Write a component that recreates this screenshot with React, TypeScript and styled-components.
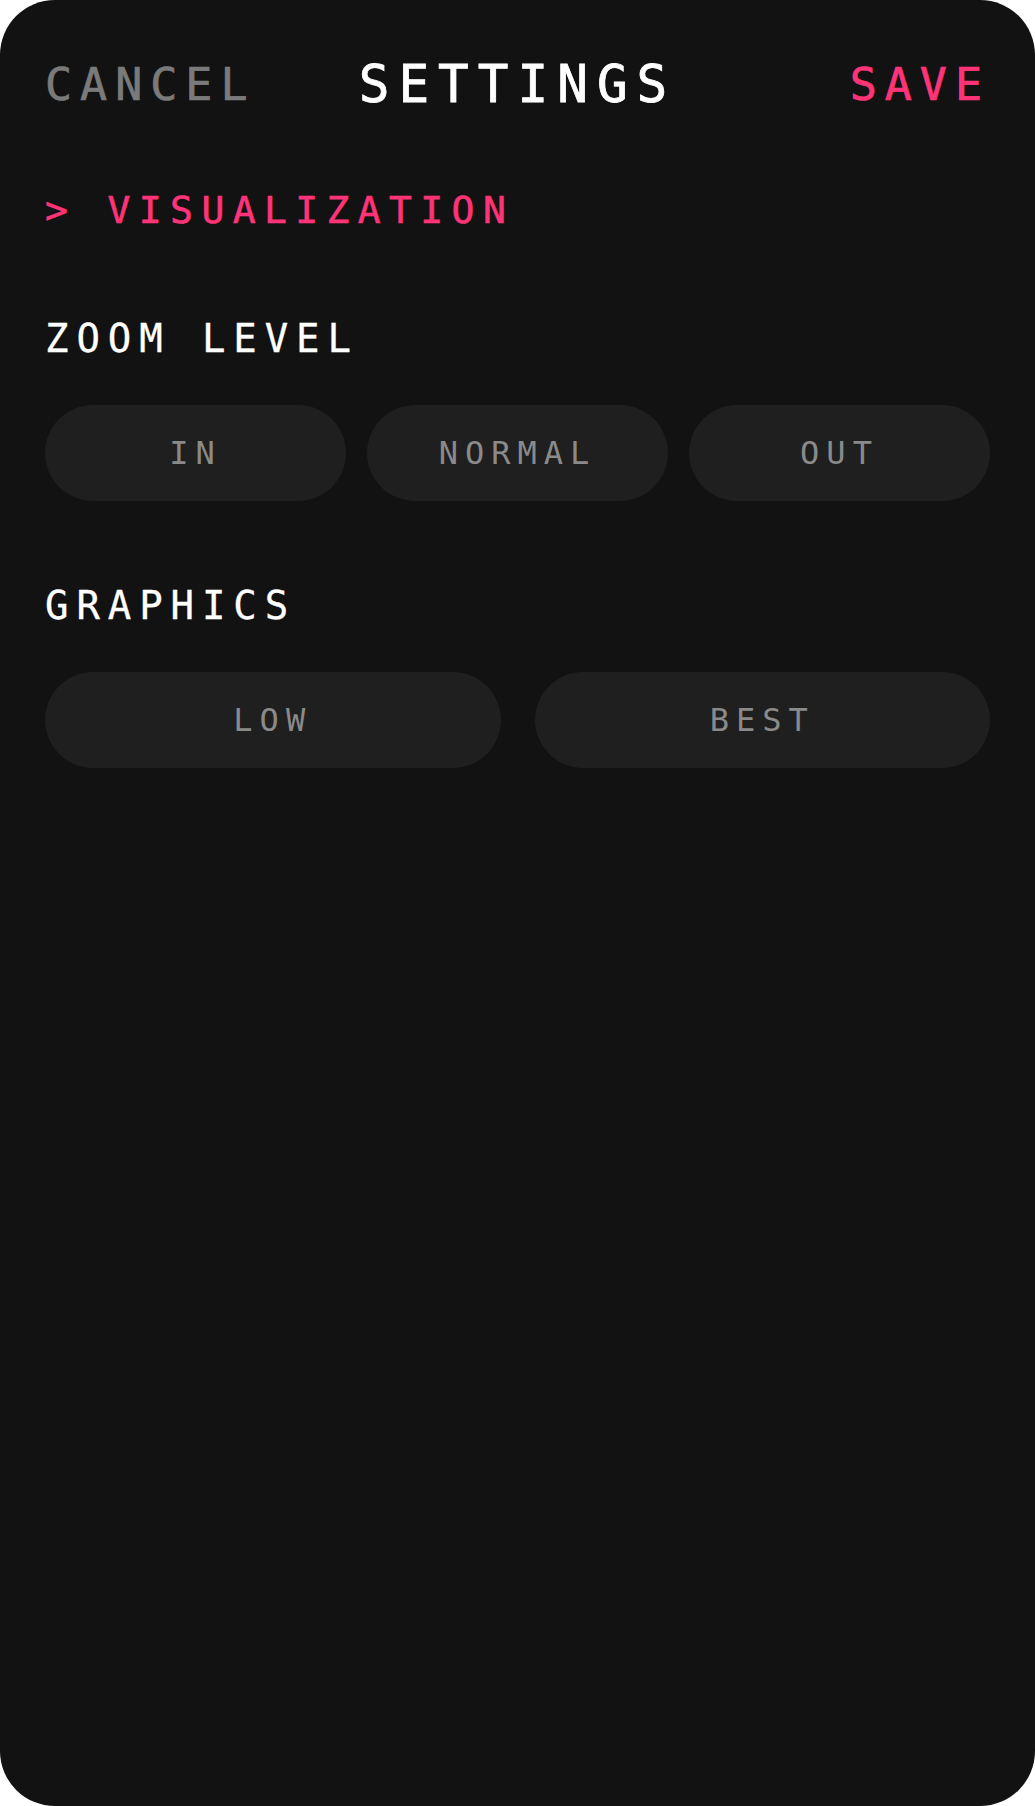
import React from "react";
import styled, { createGlobalStyle } from "styled-components";

const GlobalStyle = createGlobalStyle`
  html, body {
    margin: 0;
    padding: 0;
    background: #ffffff;
  }
`;

const mono = `"DejaVu Sans Mono", "Liberation Mono", monospace`;
const pink = "#ff3478";

const Card = styled.div`
  box-sizing: border-box;
  width: 1035px;
  height: 1806px;
  padding: 59px 45px;
  background: #121212;
  border-radius: 55px;
  font-family: ${mono};
  display: flex;
  flex-direction: column;
`;

const Header = styled.div`
  display: grid;
  grid-template-columns: 1fr auto 1fr;
  align-items: center;
  height: 51px;
`;

const HeaderAction = styled.span<{ $primary?: boolean }>`
  font-size: 45px;
  line-height: 1;
  letter-spacing: 8px;
  color: ${p => (p.$primary ? pink : "#7a7a7a")};
  -webkit-text-stroke: 0.7px currentColor;
  justify-self: ${p => (p.$primary ? "end" : "start")};
  cursor: pointer;
`;

const Title = styled.h1`
  margin: 0;
  font-size: 51px;
  font-weight: 400;
  line-height: 1;
  letter-spacing: 9px;
  color: #ffffff;
  -webkit-text-stroke: 0.8px currentColor;
`;

const Category = styled.h2`
  margin: 81px 0 0;
  font-size: 38px;
  font-weight: 400;
  line-height: 1;
  letter-spacing: 8.4px;
  color: ${pink};
  -webkit-text-stroke: 0.6px currentColor;
  white-space: pre;
`;

const Section = styled.section<{ $offset: number }>`
  display: flex;
  flex-direction: column;
  gap: 47px;
  margin-top: ${p => p.$offset}px;
`;

const Label = styled.h3`
  margin: 0;
  font-size: 39px;
  font-weight: 400;
  line-height: 1;
  letter-spacing: 7.9px;
  color: #ffffff;
  -webkit-text-stroke: 0.3px currentColor;
  white-space: pre;
`;

const Options = styled.div<{ $count: number; $gap: number }>`
  display: grid;
  grid-template-columns: repeat(${p => p.$count}, 1fr);
  column-gap: ${p => p.$gap}px;
`;

const Option = styled.button`
  height: 96px;
  border: none;
  border-radius: 48px;
  background: #1f1f1f;
  color: #8a8a8a;
  font-family: ${mono};
  font-size: 32px;
  line-height: 1;
  letter-spacing: 7px;
  padding: 0;
  cursor: pointer;
`;

const App = () => (
  <>
    <GlobalStyle />
    <Card>
      <Header>
        <HeaderAction>CANCEL</HeaderAction>
        <Title>SETTINGS</Title>
        <HeaderAction $primary>SAVE</HeaderAction>
      </Header>

      <Category>{"> VISUALIZATION"}</Category>

      <Section $offset={90}>
        <Label>ZOOM LEVEL</Label>
        <Options $count={3} $gap={21}>
          <Option>IN</Option>
          <Option>NORMAL</Option>
          <Option>OUT</Option>
        </Options>
      </Section>

      <Section $offset={85}>
        <Label>GRAPHICS</Label>
        <Options $count={2} $gap={34}>
          <Option>LOW</Option>
          <Option>BEST</Option>
        </Options>
      </Section>
    </Card>
  </>
);

export default App;
